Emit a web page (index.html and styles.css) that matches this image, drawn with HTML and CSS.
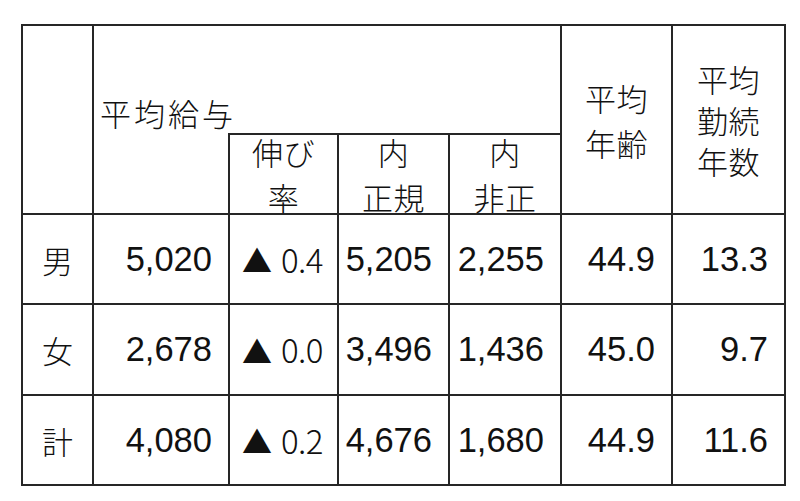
FILE: index.html
```html
<!DOCTYPE html>
<html lang="ja">
<head>
<meta charset="utf-8">
<title>平均給与</title>
<link rel="stylesheet" href="styles.css">
</head>
<body>
<div class="sheet">
  <div class="cell corner"></div>
  <div class="cell pay"><span class="pay-label">平均給与</span></div>
  <div class="cell pay-under"></div>
  <div class="cell head sub growth"><div class="lines l45">伸び<br>率</div></div>
  <div class="cell head sub reg"><div class="lines l45">内<br>正規</div></div>
  <div class="cell head sub nonreg"><div class="lines l45">内<br>非正</div></div>
  <div class="cell head age"><div class="lines l45">平均<br>年齢</div></div>
  <div class="cell head tenure"><div class="lines l41">平均<br>勤続<br>年数</div></div>

  <div class="cell label">男</div>
  <div class="cell num">5,020</div>
  <div class="cell delta"><span class="tri">▲</span><span class="dv">0.4</span></div>
  <div class="cell num">5,205</div>
  <div class="cell num">2,255</div>
  <div class="cell num">44.9</div>
  <div class="cell num">13.3</div>

  <div class="cell label">女</div>
  <div class="cell num">2,678</div>
  <div class="cell delta"><span class="tri">▲</span><span class="dv">0.0</span></div>
  <div class="cell num">3,496</div>
  <div class="cell num">1,436</div>
  <div class="cell num">45.0</div>
  <div class="cell num">9.7</div>

  <div class="cell label">計</div>
  <div class="cell num">4,080</div>
  <div class="cell delta"><span class="tri">▲</span><span class="dv">0.2</span></div>
  <div class="cell num">4,676</div>
  <div class="cell num">1,680</div>
  <div class="cell num">44.9</div>
  <div class="cell num">11.6</div>
</div>
</body>
</html>
```

FILE: styles.css
```css
html, body {
  margin: 0;
  padding: 0;
  background: #ffffff;
}

body {
  font-family: "Noto Sans CJK JP", "Noto Sans", sans-serif;
  color: #111;
}

.sheet {
  display: grid;
  grid-template-columns: 69px 134px 107px 109px 110px 109px 111px;
  grid-template-rows: 107px 78px 88px 89px 88px;
  gap: 2px;
  padding: 2px;
  background: #262626;
  width: 761px;
  margin: 24px 0 0 21px;
}

.cell {
  background: #ffffff;
  display: flex;
  align-items: center;
  justify-content: center;
  font-size: 31px;
  font-weight: 300;
  line-height: 1;
}

.corner {
  grid-column: 1;
  grid-row: 1 / 3;
}

.pay {
  grid-column: 2 / 6;
  grid-row: 1;
  justify-content: flex-start;
  align-items: flex-end;
  padding: 0 0 5px 6px;
  overflow: visible;
}

.pay-label {
  letter-spacing: 3px;
  position: relative;
  z-index: 2;
}

.pay-under {
  grid-column: 2;
  grid-row: 2;
  margin-top: -2px;
}

.growth { grid-column: 3; grid-row: 2; }
.reg { grid-column: 4; grid-row: 2; }
.nonreg { grid-column: 5; grid-row: 2; }
.age { grid-column: 6; grid-row: 1 / 3; }
.tenure { grid-column: 7; grid-row: 1 / 3; }

.lines {
  text-align: center;
  letter-spacing: 0.5px;
  white-space: nowrap;
}

.l45 { line-height: 45px; }
.l41 { line-height: 41px; }

.label {
  justify-content: center;
}

.num {
  justify-content: flex-end;
  padding-right: 16px;
  font-family: "Liberation Sans", Arial, sans-serif;
  font-weight: 400;
  font-size: 34.5px;
}

.delta {
  justify-content: flex-end;
  padding-right: 14px;
}

.tri {
  font-size: 30px;
  margin-right: 9px;
}

.dv {
  font-size: 33px;
  font-weight: 300;
  letter-spacing: -0.5px;
}
```
